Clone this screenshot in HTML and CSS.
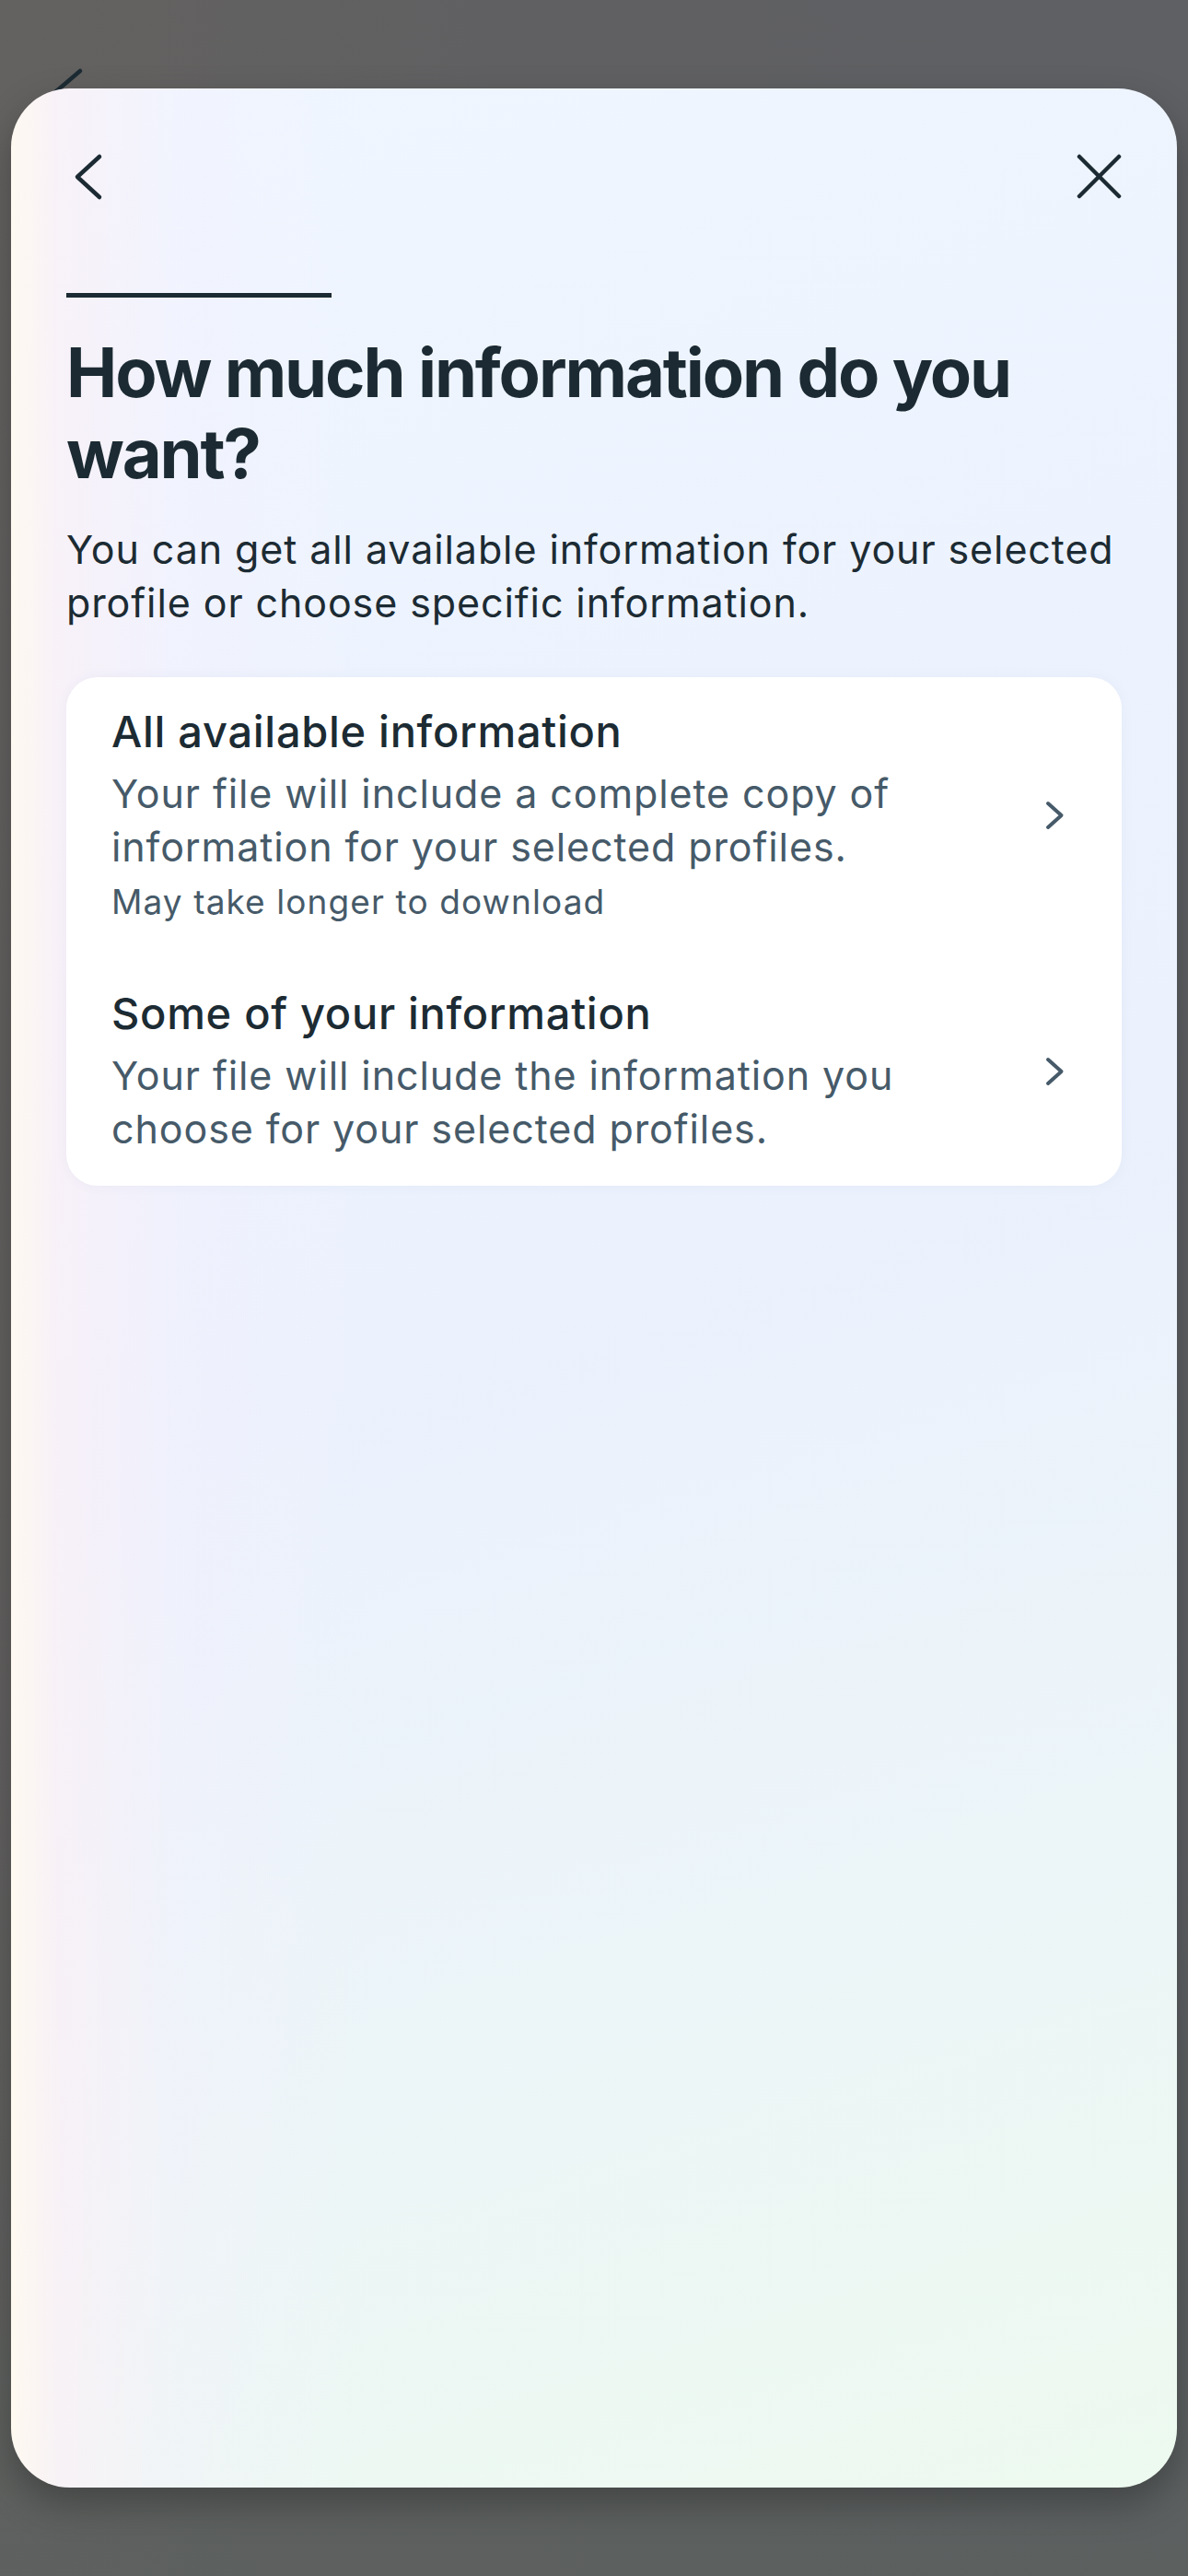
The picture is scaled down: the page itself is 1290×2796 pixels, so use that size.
FILE: index.html
```html
<!DOCTYPE html>
<html lang="en">
<head>
<meta charset="utf-8">
<title>How much information do you want?</title>
<link rel="stylesheet" href="styles.css">
</head>
<body>
<div class="screen">
  <svg class="under-back" width="60" height="70" viewBox="0 0 60 70" aria-hidden="true">
    <polyline points="37,7 10,30 37,53" fill="none" stroke="#1c2b33" stroke-width="4.5" stroke-linecap="round" stroke-linejoin="round"/>
  </svg>
  <section class="sheet">
    <div class="nav">
      <svg class="icon" width="52" height="52" viewBox="0 0 52 52" aria-label="Back">
        <polyline points="36,4 12,26 36,48" fill="none" stroke="#1c2b33" stroke-width="4.5" stroke-linecap="round" stroke-linejoin="round"/>
      </svg>
      <svg class="icon" width="52" height="52" viewBox="0 0 52 52" aria-label="Close">
        <line x1="6" y1="4" x2="49" y2="47" stroke="#1c2b33" stroke-width="4.5" stroke-linecap="round"/>
        <line x1="49" y1="4" x2="6" y2="47" stroke="#1c2b33" stroke-width="4.5" stroke-linecap="round"/>
      </svg>
    </div>
    <div class="progress"></div>
    <h1 class="title">How much information do you want?</h1>
    <p class="subtitle">You can get all available information for your selected profile or choose specific information.</p>
    <div class="card">
      <div class="option">
        <div class="option-text">
          <div class="option-title">All available information</div>
          <div class="option-desc">Your file will include a complete copy of information for your selected profiles.</div>
          <div class="option-note">May take longer to download</div>
        </div>
        <svg class="chev" width="24" height="36" viewBox="0 0 24 36" aria-hidden="true">
          <polyline points="4,5 18.5,18 4,31" fill="none" stroke="#465a69" stroke-width="4" stroke-linecap="round" stroke-linejoin="round"/>
        </svg>
      </div>
      <div class="option">
        <div class="option-text">
          <div class="option-title">Some of your information</div>
          <div class="option-desc">Your file will include the information you choose for your selected profiles.</div>
        </div>
        <svg class="chev" width="24" height="36" viewBox="0 0 24 36" aria-hidden="true">
          <polyline points="4,5 18.5,18 4,31" fill="none" stroke="#465a69" stroke-width="4" stroke-linecap="round" stroke-linejoin="round"/>
        </svg>
      </div>
    </div>
  </section>
</div>
</body>
</html>
```

FILE: styles.css
```css
* { box-sizing: border-box; }

html, body {
  margin: 0;
  padding: 0;
}

body {
  width: 1290px;
  height: 2796px;
  overflow: hidden;
  font-family: Inter, "Noto Sans", "Liberation Sans", sans-serif;
  color: #1c2b33;
}

.screen {
  position: relative;
  width: 1290px;
  height: 2796px;
  padding-top: 96px;
  background:
    linear-gradient(180deg, rgba(90, 96, 92, 0) 0%, rgba(90, 96, 92, 0) 70%, rgba(90, 96, 92, 0.6) 100%),
    linear-gradient(95deg, #646260 0%, #606062 35%, #5e6064 100%);
}

.under-back {
  position: absolute;
  left: 50px;
  top: 70px;
}

.sheet {
  position: relative;
  margin: 0 12px;
  height: 2604px;
  border-radius: 64px;
  padding: 70px 60px 0;
  background:
    linear-gradient(90deg, rgba(255, 249, 240, 0.95) 0%, rgba(252, 240, 246, 0.7) 4%, rgba(246, 240, 252, 0.35) 14%, rgba(240, 242, 255, 0) 30%),
    linear-gradient(162deg, #eff6ff 0%, #edf3fe 30%, #ebf1fd 50%, #ecf5f8 75%, #edfaef 100%);
  box-shadow: 0 18px 40px rgba(0, 0, 0, 0.28);
}

.nav {
  display: flex;
  justify-content: space-between;
  align-items: center;
  height: 52px;
}

.icon { display: block; }

.progress {
  margin-top: 100px;
  width: 288px;
  height: 5px;
  background: #1c2b33;
}

.title {
  margin: 37px 0 0;
  font-size: 74px;
  line-height: 88px;
  font-weight: 700;
  letter-spacing: -2.1px;
  color: #1c2b33;
}

.subtitle {
  margin: 31px 0 0;
  font-size: 43px;
  line-height: 58px;
  font-weight: 400;
  letter-spacing: 0.9px;
  color: #1c2b33;
}

.card {
  margin-top: 52px;
  background: #ffffff;
  border-radius: 34px;
  padding: 31px 60px 33px 49px;
  display: flex;
  flex-direction: column;
  gap: 69px;
  box-shadow: 0 0 14px rgba(60, 80, 140, 0.05);
}

.option {
  display: flex;
  align-items: center;
  gap: 40px;
}

.option-text {
  flex: 1;
  min-width: 0;
}

.option-title {
  font-size: 47px;
  line-height: 56px;
  font-weight: 500;
  letter-spacing: 0.7px;
  color: #1c2b33;
}

.option-desc {
  margin-top: 10px;
  font-size: 43px;
  line-height: 58px;
  letter-spacing: 0.9px;
  color: #465a69;
}

.option-note {
  margin-top: 7px;
  font-size: 37px;
  line-height: 48px;
  letter-spacing: 1.1px;
  color: #465a69;
}

.chev {
  display: block;
  flex: none;
}
```
